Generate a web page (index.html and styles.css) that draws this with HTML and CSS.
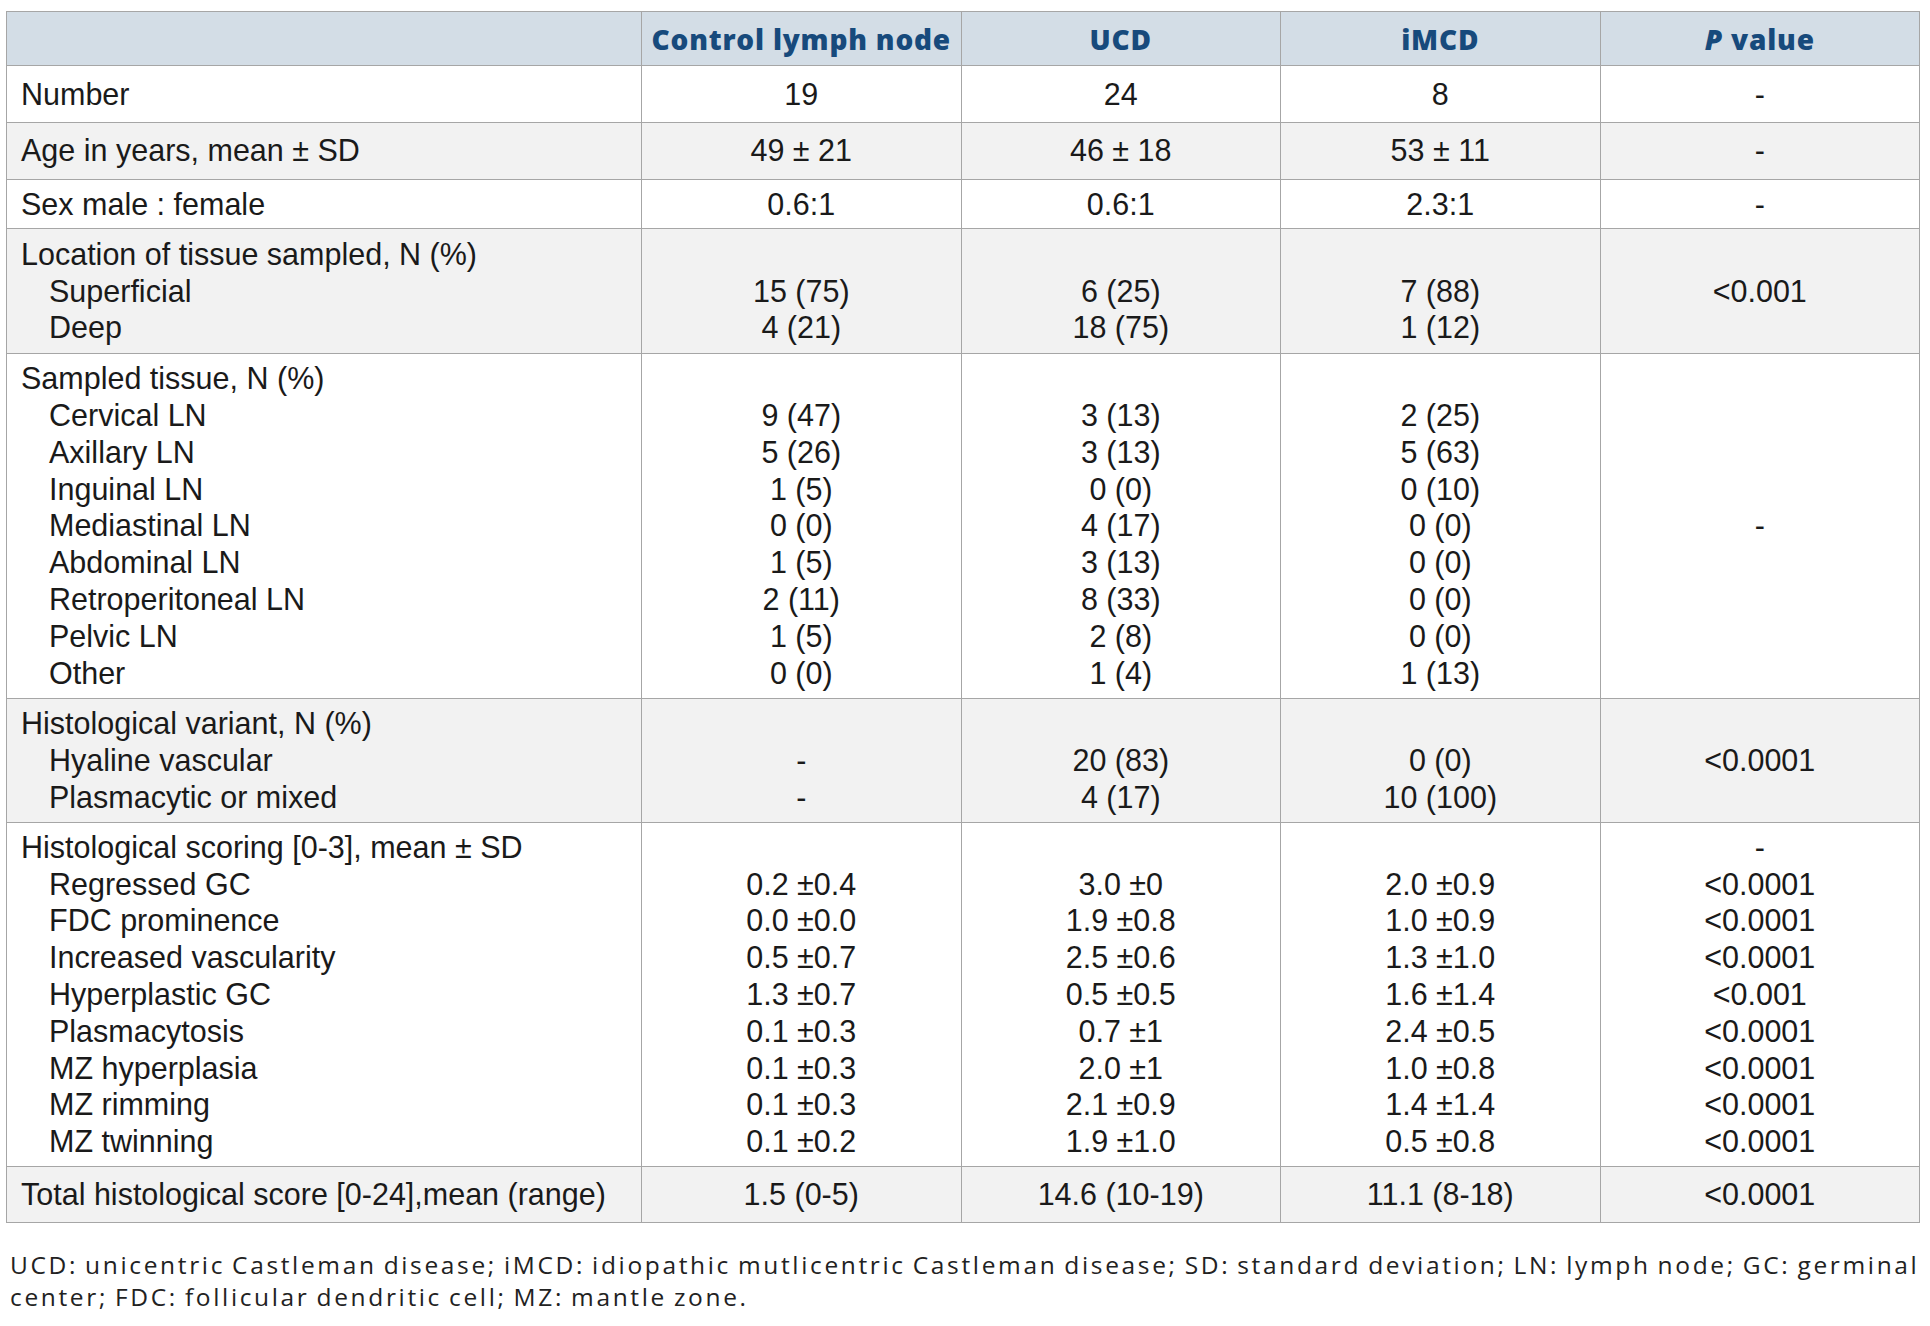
FILE: index.html
```html
<!DOCTYPE html>
<html lang="en">
<head>
<meta charset="utf-8">
<title>Histological features</title>
<link rel="stylesheet" href="styles.css">
</head>
<body>
<table class="data">
  <colgroup>
    <col class="c-label"><col class="c-val"><col class="c-val"><col class="c-val"><col class="c-val">
  </colgroup>
  <thead>
    <tr>
      <th></th>
      <th>Control lymph node</th>
      <th>UCD</th>
      <th>iMCD</th>
      <th><i>P</i> value</th>
    </tr>
  </thead>
  <tbody>
    <tr class="single">
      <td class="label">Number</td><td>19</td><td>24</td><td>8</td><td>-</td>
    </tr>
    <tr class="single alt">
      <td class="label">Age in years, mean ± SD</td><td>49 ± 21</td><td>46 ± 18</td><td>53 ± 11</td><td>-</td>
    </tr>
    <tr class="tight">
      <td class="label">Sex male : female</td><td>0.6:1</td><td>0.6:1</td><td>2.3:1</td><td>-</td>
    </tr>
    <tr class="multi alt">
      <td class="label"><span class="ln">Location of tissue sampled, N (%)</span><span class="ln sub">Superficial</span><span class="ln sub">Deep</span></td>
      <td><span class="ln">&nbsp;</span><span class="ln">15 (75)</span><span class="ln">4 (21)</span></td>
      <td><span class="ln">&nbsp;</span><span class="ln">6 (25)</span><span class="ln">18 (75)</span></td>
      <td><span class="ln">&nbsp;</span><span class="ln">7 (88)</span><span class="ln">1 (12)</span></td>
      <td>&lt;0.001</td>
    </tr>
    <tr class="multi">
      <td class="label"><span class="ln">Sampled tissue, N (%)</span><span class="ln sub">Cervical LN</span><span class="ln sub">Axillary LN</span><span class="ln sub">Inguinal LN</span><span class="ln sub">Mediastinal LN</span><span class="ln sub">Abdominal LN</span><span class="ln sub">Retroperitoneal LN</span><span class="ln sub">Pelvic LN</span><span class="ln sub">Other</span></td>
      <td><span class="ln">&nbsp;</span><span class="ln">9 (47)</span><span class="ln">5 (26)</span><span class="ln">1 (5)</span><span class="ln">0 (0)</span><span class="ln">1 (5)</span><span class="ln">2 (11)</span><span class="ln">1 (5)</span><span class="ln">0 (0)</span></td>
      <td><span class="ln">&nbsp;</span><span class="ln">3 (13)</span><span class="ln">3 (13)</span><span class="ln">0 (0)</span><span class="ln">4 (17)</span><span class="ln">3 (13)</span><span class="ln">8 (33)</span><span class="ln">2 (8)</span><span class="ln">1 (4)</span></td>
      <td><span class="ln">&nbsp;</span><span class="ln">2 (25)</span><span class="ln">5 (63)</span><span class="ln">0 (10)</span><span class="ln">0 (0)</span><span class="ln">0 (0)</span><span class="ln">0 (0)</span><span class="ln">0 (0)</span><span class="ln">1 (13)</span></td>
      <td>-</td>
    </tr>
    <tr class="multi alt">
      <td class="label"><span class="ln">Histological variant, N (%)</span><span class="ln sub">Hyaline vascular</span><span class="ln sub">Plasmacytic or mixed</span></td>
      <td><span class="ln">&nbsp;</span><span class="ln">-</span><span class="ln">-</span></td>
      <td><span class="ln">&nbsp;</span><span class="ln">20 (83)</span><span class="ln">4 (17)</span></td>
      <td><span class="ln">&nbsp;</span><span class="ln">0 (0)</span><span class="ln">10 (100)</span></td>
      <td>&lt;0.0001</td>
    </tr>
    <tr class="multi scoring">
      <td class="label"><span class="ln">Histological scoring [0-3], mean ± SD</span><span class="ln sub">Regressed GC</span><span class="ln sub">FDC prominence</span><span class="ln sub">Increased vascularity</span><span class="ln sub">Hyperplastic GC</span><span class="ln sub">Plasmacytosis</span><span class="ln sub">MZ hyperplasia</span><span class="ln sub">MZ rimming</span><span class="ln sub">MZ twinning</span></td>
      <td><span class="ln">&nbsp;</span><span class="ln">0.2 ±0.4</span><span class="ln">0.0 ±0.0</span><span class="ln">0.5 ±0.7</span><span class="ln">1.3 ±0.7</span><span class="ln">0.1 ±0.3</span><span class="ln">0.1 ±0.3</span><span class="ln">0.1 ±0.3</span><span class="ln">0.1 ±0.2</span></td>
      <td><span class="ln">&nbsp;</span><span class="ln">3.0 ±0</span><span class="ln">1.9 ±0.8</span><span class="ln">2.5 ±0.6</span><span class="ln">0.5 ±0.5</span><span class="ln">0.7 ±1</span><span class="ln">2.0 ±1</span><span class="ln">2.1 ±0.9</span><span class="ln">1.9 ±1.0</span></td>
      <td><span class="ln">&nbsp;</span><span class="ln">2.0 ±0.9</span><span class="ln">1.0 ±0.9</span><span class="ln">1.3 ±1.0</span><span class="ln">1.6 ±1.4</span><span class="ln">2.4 ±0.5</span><span class="ln">1.0 ±0.8</span><span class="ln">1.4 ±1.4</span><span class="ln">0.5 ±0.8</span></td>
      <td><span class="ln">-</span><span class="ln">&lt;0.0001</span><span class="ln">&lt;0.0001</span><span class="ln">&lt;0.0001</span><span class="ln">&lt;0.001</span><span class="ln">&lt;0.0001</span><span class="ln">&lt;0.0001</span><span class="ln">&lt;0.0001</span><span class="ln">&lt;0.0001</span></td>
    </tr>
    <tr class="single alt total">
      <td class="label">Total histological score [0-24],mean (range)</td><td>1.5 (0-5)</td><td>14.6 (10-19)</td><td>11.1 (8-18)</td><td>&lt;0.0001</td>
    </tr>
  </tbody>
</table>
<p class="note">UCD: unicentric Castleman disease; iMCD: idiopathic mutlicentric Castleman disease; SD: standard deviation; LN: lymph node; GC: germinal center; FDC: follicular dendritic cell; MZ: mantle zone.</p>
</body>
</html>
```

FILE: styles.css
```css
html, body {
  margin: 0;
  padding: 0;
  background: #ffffff;
}

body {
  padding: 11px 0 0 6px;
  font-family: "Liberation Sans", Arial, Helvetica, sans-serif;
  color: #1a1a1a;
}

.data {
  border-collapse: collapse;
  table-layout: fixed;
  width: 1913px;
  font-family: "Liberation Sans", Arial, Helvetica, sans-serif;
  font-size: 30.5px;
  line-height: 36.8px;
}

.c-label { width: 635px; }
.c-val { width: 319.5px; }

.data th,
.data td {
  border: 1px solid #a6a6a6;
  text-align: center;
  vertical-align: middle;
  padding: 6px 14px;
}

.data th {
  background: #d3dde6;
  color: #174a7c;
  font-family: "Open Sans", "Noto Sans", sans-serif;
  font-weight: 800;
  font-size: 28px;
  letter-spacing: 0.8px;
  line-height: 36px;
  padding: 8.5px 6px;
}

.data th i {
  font-style: italic;
}

.data td.label {
  text-align: left;
}

.single td { padding-top: 9.5px; padding-bottom: 9.5px; }
.tight td { padding-top: 6px; padding-bottom: 6px; }
.multi td { padding-top: 6.5px; padding-bottom: 6.5px; }
.multi.scoring td { padding-top: 5.5px; padding-bottom: 5.5px; }
.total td { padding-top: 9.5px; padding-bottom: 9px; }

.alt td { background: #f2f2f2; }

.ln { display: block; }
.ln.sub { padding-left: 28px; }

.note {
  margin: 26px 0 0 4px;
  width: 1922px;
  font-family: "Open Sans", "Noto Sans", sans-serif;
  font-size: 24.5px;
  line-height: 32.5px;
  letter-spacing: 2.65px;
  word-spacing: -2px;
  color: #222222;
}
```
